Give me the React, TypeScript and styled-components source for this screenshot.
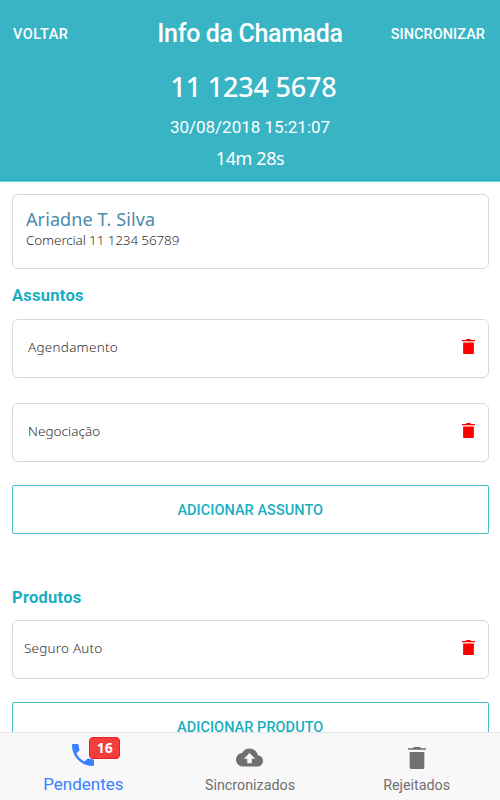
import React from "react";
import styled, { createGlobalStyle } from "styled-components";

const GlobalStyle = createGlobalStyle`
  * { box-sizing: border-box; }
  body { margin: 0; background: #fff; overflow: hidden; }
  h1, h2, p { margin: 0; }
  button { font: inherit; border: 0; padding: 0; background: none; }
`;

const Screen = styled.div`
  width: 500px;
  height: 800px;
  display: flex;
  flex-direction: column;
  overflow: hidden;
  background: #fff;
  font-family: Roboto, sans-serif;
`;

const Header = styled.header`
  flex: none;
  height: 182px;
  background: #38b4c4;
  border-bottom: 1px solid #7fd3dd;
  box-shadow: inset 0 -1px 0 #1eafbf;
  color: #fff;
`;

const TopBar = styled.div`
  height: 67px;
  padding: 0 15px 0 13px;
  display: grid;
  grid-template-columns: 100px 1fr 100px;
  align-items: center;
`;

const HeaderAction = styled.button<{ $end?: boolean }>`
  color: #fff;
  font-size: 14.5px !important;
  font-weight: 500 !important;
  line-height: 18px !important;
  padding-top: 2px !important;
  letter-spacing: ${(p) => (p.$end ? "0.05px" : "0.55px")};
  white-space: nowrap;
  text-align: ${(p) => (p.$end ? "right" : "left")};
`;

const Title = styled.h1`
  font-size: 25px;
  font-weight: 500;
  line-height: 30px;
  letter-spacing: -0.35px;
  padding-left: 2px;
  text-align: center;
  white-space: nowrap;
`;

const CallSummary = styled.div`
  display: flex;
  flex-direction: column;
  align-items: center;
`;

const PhoneNumber = styled.p`
  padding-left: 7px;
  font: 500 27px/40px "Noto Sans", sans-serif;
  letter-spacing: -0.2px;
`;

const CallDate = styled.p`
  font-size: 17px;
  line-height: 40px;
`;

const Duration = styled.p`
  font: 400 18px/24px "Noto Sans", sans-serif;
  letter-spacing: -0.4px;
  margin-top: -1px;
`;

const Content = styled.main`
  flex: 1;
  min-height: 0;
  overflow: hidden;
  padding: 12px 11.5px 0 12px;
`;

const Card = styled.div`
  border: 1.5px solid #d9d9d9;
  border-radius: 6px;
  background: #fff;
`;

const ContactCard = styled(Card)`
  height: 75px;
  padding: 12px 13px;
  font-family: "Noto Sans", sans-serif;
`;

const ContactName = styled.p`
  color: #4a8aaa;
  font-size: 18px;
  line-height: 24px;
  letter-spacing: 0.1px;
`;

const ContactPhone = styled.p`
  color: #303030;
  font-size: 13.5px;
  font-weight: 300;
  line-height: 19px;
  letter-spacing: -0.13px;
`;

const Section = styled.section`
  & + & { margin-top: 37px; }
`;

const SectionTitle = styled.h2<{ $height: number }>`
  height: ${(p) => p.$height}px;
  padding-top: 16px;
  color: #17afbf;
  font-size: 16.5px;
  font-weight: 700;
  line-height: 22px;
  letter-spacing: 0.25px;
`;

const ItemCard = styled(Card)<{ $inset: number }>`
  height: 59px;
  margin-bottom: 25px;
  padding: 0 12.5px 4px ${(p) => p.$inset}px;
  display: flex;
  align-items: center;
  justify-content: space-between;
`;

const ItemName = styled.span<{ $tracking: number }>`
  color: #303030;
  font: 300 13.5px/20px "Noto Sans", sans-serif;
  letter-spacing: ${(p) => p.$tracking}px;
`;

const AddButton = styled.button`
  display: block;
  width: 100%;
  height: 49px;
  margin-top: -2px;
  padding-top: 1px !important;
  border: 1.5px solid #42bac7;
  border-radius: 2px;
  color: #17afbf;
  font-size: 14.5px !important;
  font-weight: 500 !important;
  letter-spacing: 0.05px;
`;

const TabBar = styled.nav`
  flex: none;
  height: 68px;
  display: grid;
  grid-template-columns: repeat(3, 1fr);
  background: #f8f8f8;
  border-top: 1.5px solid #e5e5e5;
`;

const Tab = styled.button<{ $active?: boolean }>`
  display: flex;
  flex-direction: column;
  align-items: center;
  padding-top: 11px !important;
  color: ${(p) => (p.$active ? "#3880ff" : "#707070")};
`;

const TabIcon = styled.span<{ $drop?: number }>`
  position: relative;
  height: 31px;
  padding-top: ${(p) => p.$drop ?? 0}px;
  display: flex;
`;

const TabLabel = styled.span<{ $active?: boolean }>`
  font-size: ${(p) => (p.$active ? 17 : 14.3)}px;
  line-height: ${(p) => (p.$active ? 18 : 20)}px;
`;

const Badge = styled.span`
  position: absolute;
  left: 17px;
  top: -7px;
  width: 31px;
  height: 22px;
  border: 1px solid #e61e25;
  border-radius: 4px;
  background: #f53d3d;
  color: #fff;
  font: 700 14px/19px "Noto Sans", sans-serif;
  text-align: center;
`;

const Glyph = styled.svg`
  display: block;
  flex: none;
  fill: currentColor;
`;

const RedGlyph = styled(Glyph)`
  color: #ff0000;
`;

const SMALL_TRASH = "M6.2 7.3h11.6V20q0 1-1 1H7.2q-1 0-1-1zM5 4.3h4.3L9.8 3h4.4l.5 1.3H19v1.3H5z";
const TAB_TRASH = "M6.3 7.1h11.4V19.5q0 1.5-1.5 1.5H7.8q-1.5 0-1.5-1.5zM5 4.1h3.6l1-1.1h4.8l1 1.1H19v1.2H5z";
const PHONE =
  "M6.62 10.79c1.44 2.83 3.76 5.14 6.59 6.59l2.2-2.2c.27-.27.67-.36 1.02-.24 1.12.37 2.33.57 3.57.57.55 0 1 .45 1 1V20c0 .55-.45 1-1 1-9.39 0-17-7.61-17-17 0-.55.45-1 1-1h3.5c.55 0 1 .45 1 1 0 1.25.2 2.45.57 3.57.11.35.03.74-.25 1.02l-2.2 2.2z";
const CLOUD =
  "M19.35 10.04C18.67 6.59 15.64 4 12 4 9.11 4 6.6 5.64 5.35 8.04 2.34 8.36 0 10.91 0 14c0 3.31 2.69 6 6 6h13c2.76 0 5-2.24 5-5 0-2.64-2.05-4.78-4.65-4.96zM14 13v4h-4v-4H7l5-5 5 5h-3z";

type ItemProps = { name: string; inset: number; tracking: number };

function Item({ name, inset, tracking }: ItemProps) {
  return (
    <ItemCard $inset={inset}>
      <ItemName $tracking={tracking}>{name}</ItemName>
      <RedGlyph width="13" height="15" viewBox="5 3 14 18" preserveAspectRatio="none">
        <path d={SMALL_TRASH} />
      </RedGlyph>
    </ItemCard>
  );
}

export default function App() {
  return (
    <Screen>
      <GlobalStyle />
      <Header>
        <TopBar>
          <HeaderAction>VOLTAR</HeaderAction>
          <Title>Info da Chamada</Title>
          <HeaderAction $end>SINCRONIZAR</HeaderAction>
        </TopBar>
        <CallSummary>
          <PhoneNumber>11 1234 5678</PhoneNumber>
          <CallDate>30/08/2018 15:21:07</CallDate>
          <Duration>14m 28s</Duration>
        </CallSummary>
      </Header>
      <Content>
        <ContactCard>
          <ContactName>Ariadne T. Silva</ContactName>
          <ContactPhone>Comercial 11 1234 56789</ContactPhone>
        </ContactCard>
        <Section>
          <SectionTitle $height={50}>Assuntos</SectionTitle>
          <Item name="Agendamento" inset={15} tracking={0.25} />
          <Item name="Negociação" inset={15} tracking={0.05} />
          <AddButton>ADICIONAR ASSUNTO</AddButton>
        </Section>
        <Section>
          <SectionTitle $height={49}>Produtos</SectionTitle>
          <Item name="Seguro Auto" inset={11} tracking={0.2} />
          <AddButton>ADICIONAR PRODUTO</AddButton>
        </Section>
      </Content>
      <TabBar>
        <Tab $active>
          <TabIcon>
            <Glyph width="22" height="22" viewBox="3 3 18 18"><path d={PHONE} /></Glyph>
            <Badge>16</Badge>
          </TabIcon>
          <TabLabel $active>Pendentes</TabLabel>
        </Tab>
        <Tab>
          <TabIcon>
            <Glyph width="27" height="27" viewBox="0 0 24 24"><path d={CLOUD} /></Glyph>
          </TabIcon>
          <TabLabel>Sincronizados</TabLabel>
        </Tab>
        <Tab>
          <TabIcon $drop={3}>
            <Glyph width="18" height="22" viewBox="5 3 14 18" preserveAspectRatio="none"><path d={TAB_TRASH} /></Glyph>
          </TabIcon>
          <TabLabel>Rejeitados</TabLabel>
        </Tab>
      </TabBar>
    </Screen>
  );
}
